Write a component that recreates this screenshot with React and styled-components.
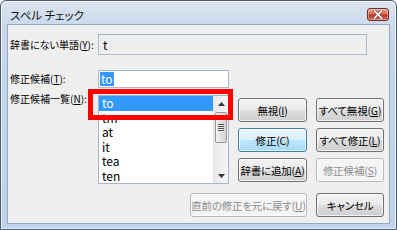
import React from "react";
import styled, { createGlobalStyle } from "styled-components";

const Global = createGlobalStyle`
  html, body { margin: 0; padding: 0; width: 397px; height: 230px; overflow: hidden; background: #fff; }
  * { box-sizing: border-box; }
  body {
    font-family: "Noto Sans CJK JP", "Noto Sans", sans-serif;
    font-size: 10.5px;
    font-feature-settings: "palt";
    color: #000;
  }
`;

const Window = styled.div`
  width: 397px;
  height: 230px;
  border: 1px solid #4d5d70;
  border-radius: 6px 6px 0 0;
  background: linear-gradient(180deg, #dbe5f0 0%, #c9d8ea 12%, #bfd2e9 100%);
  display: flex;
  flex-direction: column;
  padding: 0 6px 5px 6px;
  box-shadow: inset 0 0 0 1px rgba(255,255,255,0.6);
`;

const TitleBar = styled.div`
  height: 23px;
  display: flex;
  justify-content: space-between;
  align-items: flex-start;
  padding-left: 3px;
`;

const Title = styled.div`
  font-size: 11.5px;
  line-height: 12px;
  margin-top: 8px;
  color: #111;
`;

const CloseBtn = styled.div`
  width: 22px;
  height: 13px;
  margin-top: 7px;
  margin-right: 1px;
  border: 1px solid #6e2a20;
  border-radius: 3px;
  background: linear-gradient(180deg, #e9a799 0%, #d86a56 45%, #c0381f 55%, #d0705c 100%);
  display: flex;
  align-items: center;
  justify-content: center;
  box-shadow: inset 0 0 0 1px rgba(255,255,255,0.35);
`;

const Client = styled.div`
  flex: 1;
  border: 1px solid #92a9c6;
  background: #efefef;
  display: flex;
  flex-direction: column;
  padding: 0 5px 0 2px;
`;

const Row = styled.div`
  display: flex;
  align-items: center;
  margin-top: ${p => p.$mt}px;
`;

const Label = styled.div`
  width: 88px;
  flex: none;
  white-space: nowrap;
  font-size: 10px;
  line-height: 14px;
  margin-top: ${p => p.$mt || 0}px;
`;

const Field = styled.div`
  width: ${p => p.$w}px;
  height: ${p => p.$h}px;
  border: 1px solid #abb9c9;
  border-top-color: #9fb2c8;
  background: ${p => p.$disabled ? "#efefef" : "#fff"};
  display: flex;
  align-items: center;
  padding-left: 4px;
  font-size: 12px;
`;

const Sel = styled.span`
  background: #3399ff;
  color: #fff;
  line-height: 14px;
  padding: 0 1px;
  margin-left: -3px;
`;

const Main = styled.div`
  display: flex;
  align-items: flex-start;
  margin-top: 7px;
`;

const ListWrap = styled.div`
  position: relative;
  width: 131px;
  height: 89px;
  flex: none;
`;

const List = styled.div`
  width: 131px;
  height: 89px;
  border: 1px solid #a5b4c6;
  background: #fff;
  display: flex;
`;

const Items = styled.div`
  flex: 1;
  font-size: 12px;
`;

const Item = styled.div`
  height: 14.5px;
  line-height: 14.5px;
  padding-left: 3px;
  background: ${p => p.$sel ? "#3399ff" : "transparent"};
  color: ${p => p.$sel ? "#fff" : "#000"};
`;

const Scroll = styled.div`
  width: 15px;
  display: flex;
  flex-direction: column;
  background: linear-gradient(90deg, #e9e9e9, #f5f5f5);
  border-left: 1px solid #e3e3e3;
`;

const Arrow = styled.div`
  height: 15px;
  display: flex;
  align-items: center;
  justify-content: center;
`;

const Thumb = styled.div`
  margin: 1px 1px 0 1px;
  height: 31px;
  border: 1px solid #979797;
  border-radius: 2px;
  background: linear-gradient(90deg, #f2f2f2, #e2e2e2 50%, #d4d4d4);
  display: flex;
  flex-direction: column;
  align-items: center;
  justify-content: center;
  gap: 1px;
`;

const Grip = styled.div`
  width: 6px;
  height: 1px;
  background: #555;
`;

const Spacer = styled.div`
  flex: 1;
`;

const Highlight = styled.div`
  position: absolute;
  left: -10px;
  top: -6px;
  width: 145px;
  height: 31px;
  border: 5px solid #ff0000;
  pointer-events: none;
`;

const ButtonsCol = styled.div`
  display: grid;
  grid-template-columns: 69px 68px;
  column-gap: 9px;
  row-gap: 6px;
  margin-top: 3px;
  margin-left: 9px;
`;

const Button = styled.div`
  width: ${p => p.$w || 0}px;
  height: 24px;
  border: 1px solid ${p => p.$disabled ? "#b5b9bc" : p.$default ? "#3c7fb1" : "#707070"};
  border-radius: 3px;
  display: flex;
  align-items: center;
  justify-content: center;
  white-space: nowrap;
  letter-spacing: -0.2px;
  color: ${p => p.$disabled ? "#8d8d8d" : "#000"};
  background: ${p => p.$disabled
    ? "#f4f4f4"
    : p.$default
      ? "linear-gradient(180deg, #eaf6fd 0%, #d9f0fc 48%, #bee6fd 52%, #a7d9f5 100%)"
      : "linear-gradient(180deg, #f2f2f2 0%, #ebebeb 48%, #dddddd 52%, #cfcfcf 100%)"};
  box-shadow: inset 0 0 0 1px rgba(255,255,255,0.7);
  font-size: 10.5px;
`;

const Bottom = styled.div`
  display: flex;
  justify-content: flex-end;
  gap: 9px;
  margin-top: 9px;
`;

export default function App() {
  return (
    <>
      <Global />
      <Window>
        <TitleBar>
          <Title>スペル チェック</Title>
          <CloseBtn>
            <svg width="10" height="9" viewBox="0 0 10 9">
              <path d="M1.5 1 L8.5 8 M8.5 1 L1.5 8" stroke="#5a1a10" strokeWidth="3" strokeLinecap="square" />
              <path d="M1.5 1 L8.5 8 M8.5 1 L1.5 8" stroke="#fff" strokeWidth="1.8" strokeLinecap="square" />
            </svg>
          </CloseBtn>
        </TitleBar>
        <Client>
          <Row $mt={9}>
            <Label>辞書にない単語(<u>Y</u>):</Label>
            <Field $w={269} $h={21} $disabled>t</Field>
          </Row>
          <Row $mt={15}>
            <Label>修正候補(<u>T</u>):</Label>
            <Field $w={131} $h={18}><Sel>to</Sel></Field>
          </Row>
          <Main>
            <Label $mt={-3}>修正候補一覧(<u>N</u>):</Label>
            <ListWrap>
              <List>
                <Items>
                  <Item $sel>to</Item>
                  <Item>tm</Item>
                  <Item>at</Item>
                  <Item>it</Item>
                  <Item>tea</Item>
                  <Item>ten</Item>
                </Items>
                <Scroll>
                  <Arrow>
                    <svg width="7" height="4" viewBox="0 0 7 4"><path d="M0 4 L3.5 0 L7 4 Z" fill="#333" /></svg>
                  </Arrow>
                  <Thumb>
                    <Grip /><Grip /><Grip /><Grip />
                  </Thumb>
                  <Spacer />
                  <Arrow>
                    <svg width="7" height="4" viewBox="0 0 7 4"><path d="M0 0 L7 0 L3.5 4 Z" fill="#333" /></svg>
                  </Arrow>
                </Scroll>
              </List>
              <Highlight />
            </ListWrap>
            <ButtonsCol>
              <Button $w={69}>無視(<u>I</u>)</Button>
              <Button $w={68}>すべて無視(<u>G</u>)</Button>
              <Button $w={69} $default>修正(C)</Button>
              <Button $w={68}>すべて修正(<u>L</u>)</Button>
              <Button $w={69}>辞書に追加(<u>A</u>)</Button>
              <Button $w={68} $disabled>修正候補(<u>S</u>)</Button>
            </ButtonsCol>
          </Main>
          <Bottom>
            <Button $w={117} $disabled>直前の修正を元に戻す(<u>U</u>)</Button>
            <Button $w={68}>キャンセル</Button>
          </Bottom>
        </Client>
      </Window>
    </>
  );
}
